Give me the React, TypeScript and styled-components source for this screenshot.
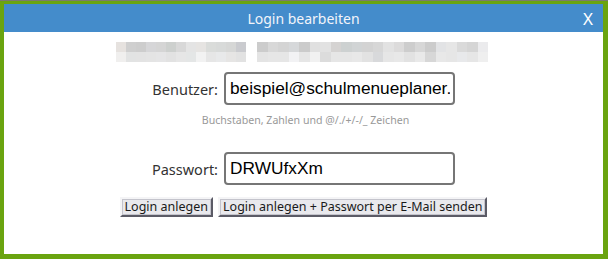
import React from 'react'
import styled, { createGlobalStyle } from 'styled-components'

const Global = createGlobalStyle`
  html, body {
    margin: 0;
    padding: 0;
  }
  body {
    width: 608px;
    height: 259px;
    overflow: hidden;
    background: #6aa410;
    border-top: 1px solid #7a7a6e;
    box-sizing: border-box;
    font-family: "Noto Sans", "DejaVu Sans", sans-serif;
  }
`

// verpixelter Bereich (Schulname o.ä.)
const blurTop = ['#e6e2df', '#cfcfcf', '#cdcdcd', '#d6d6d8', '#d5d5d5', '#cdd0ce', '#d8d8d8', '#e4e4e4', '#e6e4e2', '#dadcda', '#d8dad9', '#d6d7d6', '#cacbcf']
const blurTop2 = ['#cccccc', '#d8d8d8', '#d4d4d4', '#d6d8da', '#cbcbcb', '#e0e0e0', '#e2e2e2', '#d5d3d2', '#cdd1d1', '#d1d4d5', '#d3d3d3', '#d7d7d7', '#e2e2e2', '#dcdbdb', '#cdcdcd', '#d7d7d7', '#cccccc', '#e2e3e5', '#e6e6e6', '#dadada', '#d5d5d5', '#ebebed']
const blurBot = ['#f0efee', '#e2e3e3', '#e3e3e3', '#e4e4e4', '#e5e5e6', '#e2e2e2', '#e6e6e6', '#e4e6e6', '#f2f2f2', '#e6e6e6', '#e8e9ea', '#e6e5e4', '#e2e2e2']
const blurBot2 = ['#e4e4e4', '#e6e6e6', '#e6e6e6', '#f2f2f4', '#e6e6e6', '#f1f1f1', '#dcdcdc', '#e6e6e6', '#e6e6e6', '#e8e8e8', '#e2e2e2', '#d8d9db', '#e6e6e6', '#e8e8e8', '#e2e2e2', '#e9e9e9', '#d7d7d7', '#e8e8e8', '#e6e6e6', '#e8e9eb', '#e6e6e6', '#efefef']

const App = () => {
  return (
    <>
      <Global />
      <Dialog>
        <Header>
          <Title>Login bearbeiten</Title>
          <Close>X</Close>
        </Header>
        <Body>
          <Blur>
            <BlurGroup>
              <BlurRow>{blurTop.map((c, i) => <Cell key={i} $w={10} style={{ background: c }} />)}</BlurRow>
              <BlurRow>{blurBot.map((c, i) => <Cell key={i} $w={10} style={{ background: c }} />)}</BlurRow>
            </BlurGroup>
            <BlurGroup>
              <BlurRow>{blurTop2.map((c, i) => <Cell key={i} $w={10.5} style={{ background: c }} />)}</BlurRow>
              <BlurRow>{blurBot2.map((c, i) => <Cell key={i} $w={10.5} style={{ background: c }} />)}</BlurRow>
            </BlurGroup>
          </Blur>
          <Row $top={10}>
            <Label>Benutzer:</Label>
            <Input defaultValue="beispiel@schulmenueplaner.de" />
          </Row>
          <Hint>Buchstaben, Zahlen und @/./+/-/_ Zeichen</Hint>
          <Row $top={7}>
            <Label>Passwort:</Label>
            <Input defaultValue="DRWUfxXm" />
          </Row>
          <Buttons>
            <Button>Login anlegen</Button>
            <Button>Login anlegen + Passwort per E-Mail senden</Button>
          </Buttons>
        </Body>
      </Dialog>
    </>
  )
}

export default App

const Dialog = styled.div`
  margin: 3px 5px 0 4px;
  height: 250px;
  background: #ffffff;
  display: flex;
  flex-direction: column;
`

const Header = styled.div`
  height: 28px;
  background: #448ccb;
  display: flex;
  align-items: center;
  justify-content: center;
  position: relative;
`

const Title = styled.div`
  color: #f2f4fa;
  font-size: 14px;
`

const Close = styled.div`
  position: absolute;
  right: 10px;
  top: 3px;
  color: #ffffff;
  font-size: 17px;
`

const Body = styled.div`
  display: flex;
  flex-direction: column;
  padding-top: 10px;
`

const Blur = styled.div`
  display: flex;
  gap: 11px;
  margin-left: 112px;
`

const BlurGroup = styled.div`
  display: flex;
  flex-direction: column;
`

const BlurRow = styled.div`
  display: flex;
`

const Cell = styled.div<{ $w: number }>`
  width: ${p => p.$w}px;
  height: 10px;
`

const Row = styled.div<{ $top: number }>`
  display: flex;
  align-items: center;
  margin-left: 114px;
  margin-top: ${p => p.$top}px;
`

const Label = styled.div`
  width: 100px;
  text-align: right;
  color: #333333;
  font-size: 14.5px;
  margin-right: 6px;
`

const Input = styled.input`
  width: 231px;
  height: 33px;
  box-sizing: border-box;
  border: 2px solid #767676;
  border-radius: 4px;
  padding: 0 3px 0 4px;
  font-family: "Liberation Sans", Arial, sans-serif;
  font-size: 17.3px;
  color: #000000;
  outline: none;
`

const Hint = styled.div`
  text-align: center;
  font-size: 10.6px;
  line-height: 14px;
  color: #999999;
  margin: 8px 0 18px 4px;
`

const Buttons = styled.div`
  display: flex;
  justify-content: center;
  gap: 5px;
  margin-top: 12px;
`

const Button = styled.button`
  height: 20px;
  padding: 0 3px;
  background: #e9e9ed;
  border: 2px solid;
  border-color: #f4f4f6 #5b5b66 #5b5b66 #f4f4f6;
  box-shadow: inset 0 0 0 1px #c4c4cc;
  font-family: "Noto Sans", "DejaVu Sans", sans-serif;
  font-size: 12.5px;
  color: #1a1a1a;
  line-height: 1;
`
